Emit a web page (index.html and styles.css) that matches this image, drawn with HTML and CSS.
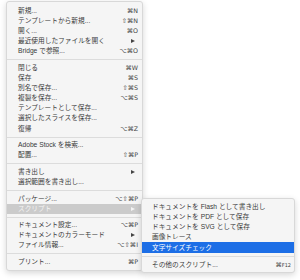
FILE: index.html
```html
<!DOCTYPE html>
<html lang="ja">
<head>
    <meta charset="UTF-8">
    <title>ファイルメニュー</title>
    <link rel="stylesheet" href="styles.css">
</head>
<body>

<div class="stage">
    <!-- main file menu -->
    <ul class="menu main-menu">
        <li class="item"><span>新規...</span><span class="key">⌘N</span></li>
        <li class="item"><span>テンプレートから新規...</span><span class="key">⇧⌘N</span></li>
        <li class="item"><span>開く...</span><span class="key">⌘O</span></li>
        <li class="item"><span>最近使用したファイルを開く</span><span class="arrow"></span></li>
        <li class="item"><span>Bridge で参照...</span><span class="key">⌥⌘O</span></li>
        <li class="sep"></li>
        <li class="item"><span>閉じる</span><span class="key">⌘W</span></li>
        <li class="item"><span>保存</span><span class="key">⌘S</span></li>
        <li class="item"><span>別名で保存...</span><span class="key">⇧⌘S</span></li>
        <li class="item"><span>複製を保存...</span><span class="key">⌥⌘S</span></li>
        <li class="item"><span>テンプレートとして保存...</span></li>
        <li class="item"><span>選択したスライスを保存...</span></li>
        <li class="item"><span>復帰</span><span class="key">⌥⌘Z</span></li>
        <li class="sep"></li>
        <li class="item"><span>Adobe Stock を検索...</span></li>
        <li class="item"><span>配置...</span><span class="key">⇧⌘P</span></li>
        <li class="sep"></li>
        <li class="item"><span>書き出し</span><span class="arrow"></span></li>
        <li class="item"><span>選択範囲を書き出し...</span></li>
        <li class="sep"></li>
        <li class="item"><span>パッケージ...</span><span class="key">⌥⇧⌘P</span></li>
        <li class="item open"><span>スクリプト</span><span class="arrow"></span></li>
        <li class="sep"></li>
        <li class="item"><span>ドキュメント設定...</span><span class="key">⌥⌘P</span></li>
        <li class="item"><span>ドキュメントのカラーモード</span><span class="arrow"></span></li>
        <li class="item"><span>ファイル情報...</span><span class="key">⌥⇧⌘I</span></li>
        <li class="sep"></li>
        <li class="item"><span>プリント...</span><span class="key">⌘P</span></li>
    </ul>

    <!-- script submenu -->
    <ul class="menu sub-menu">
        <li class="item"><span>ドキュメントを Flash として書き出し</span></li>
        <li class="item"><span>ドキュメントを PDF として保存</span></li>
        <li class="item"><span>ドキュメントを SVG として保存</span></li>
        <li class="item"><span>画像トレース</span></li>
        <li class="item active"><span>文字サイズチェック</span></li>
        <li class="sep"></li>
        <li class="item"><span>その他のスクリプト...</span><span class="key">⌘<small>F12</small></span></li>
    </ul>
</div>

</body>
</html>
```

FILE: styles.css
```css
body {
    margin: 0;
    background-color: #fff;
    font-family: 'Liberation Sans', 'Noto Sans CJK JP', 'DejaVu Sans', sans-serif;
    font-size: 6.7px;
    color: #3a3a3a;
}
.stage {
    position: relative;
    width: 300px;
    height: 280px;
    overflow: hidden;
}
.menu {
    list-style: none;
    margin: 0;
    background-color: #f5f5f5;
    border: 1px solid #d8d8d8;
    border-radius: 3px;
    box-shadow: 0 2px 6px rgba(0, 0, 0, 0.16);
}
.main-menu {
    width: 135px;
    margin: 1px 0 0 6px;
    padding: 4px 0 3px;
}
.sub-menu {
    position: absolute;
    left: 141px;
    top: 198px;
    width: 152px;
    padding: 3px 0 2px;
}
.item {
    display: flex;
    justify-content: space-between;
    align-items: center;
    height: 10.1px;
    line-height: 10.1px;
    padding: 0 4px 0 11px;
    white-space: nowrap;
}
.sub-menu .item {
    padding: 0 3px 0 10px;
}
.key {
    font-family: 'DejaVu Sans', 'Liberation Sans', sans-serif;
    font-size: 6.3px;
    color: #444;
}
.key small {
    font-size: 5px;
}
.arrow {
    width: 0;
    height: 0;
    margin-right: 3px;
    border-top: 2.5px solid transparent;
    border-bottom: 2.5px solid transparent;
    border-left: 4px solid #444;
}
.sep {
    height: 1px;
    margin: 3px 0 2.5px;
    background-color: #dcdcdc;
}
.item.open {
    background-color: #cbcbcb;
    color: #f4f4f4;
}
.item.open .arrow {
    border-left-color: #f4f4f4;
}
.item.active {
    height: 11px;
    background-color: #1c6ee6;
    color: #fff;
}
```
